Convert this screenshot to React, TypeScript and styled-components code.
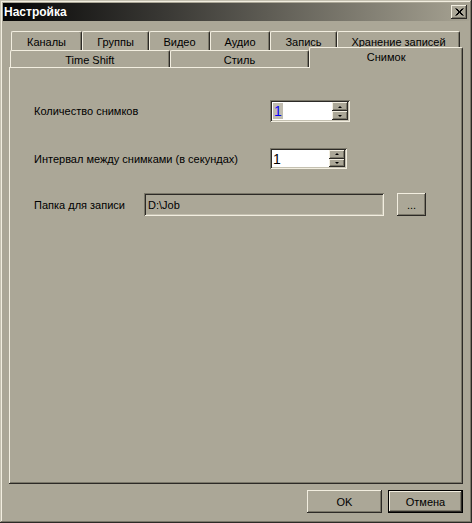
import React from "react";
import styled, { createGlobalStyle } from "styled-components";

const face = "#aba797";
const hilite = "#f2eee0";
const light = "#c4c0b0";
const shadow = "#7a7769";
const dark = "#2c2a26";

const GlobalStyle = createGlobalStyle`
  html, body {
    margin: 0;
    padding: 0;
    background: ${face};
  }
  * {
    box-sizing: border-box;
  }
`;

const Window = styled.div`
  width: 472px;
  height: 523px;
  padding: 3px;
  display: flex;
  flex-direction: column;
  background: ${face};
  font-family: "Liberation Sans", Arial, sans-serif;
  font-size: 11px;
  color: #000;
  box-shadow: inset -1px -1px ${dark}, inset 1px 1px ${light},
    inset -2px -2px ${shadow}, inset 2px 2px ${hilite};
`;

const TitleBar = styled.div`
  height: 18px;
  display: flex;
  align-items: center;
  justify-content: space-between;
  padding: 0 2px 0 1px;
  background: linear-gradient(to right, #050505 0%, #3a3935 35%, #a6a292 100%);
`;

const Title = styled.span`
  color: #fff;
  font-weight: bold;
  font-size: 12px;
`;

const CloseButton = styled.div`
  width: 16px;
  height: 14px;
  display: flex;
  align-items: center;
  justify-content: center;
  background: ${face};
  box-shadow: inset -1px -1px ${dark}, inset 1px 1px ${hilite},
    inset -2px -2px ${shadow};
`;

const Body = styled.div`
  flex: 1;
  display: flex;
  flex-direction: column;
  padding: 10px 6px 7px 6px;
`;

const TabStrip = styled.div`
  display: flex;
  flex-direction: column;
  height: 36px;
`;

const TabRow = styled.div<{ $height: number; $indent: number }>`
  display: flex;
  height: ${(p) => p.$height}px;
  margin-left: ${(p) => p.$indent}px;
  align-items: flex-end;
`;

const Tab = styled.div<{ $w: number; $active?: boolean; $h: number }>`
  width: ${(p) => p.$w}px;
  height: ${(p) => (p.$active ? p.$h + 4 : p.$h)}px;
  margin-bottom: ${(p) => (p.$active ? -1 : 0)}px;
  position: relative;
  z-index: ${(p) => (p.$active ? 2 : 0)};
  display: flex;
  justify-content: center;
  align-items: ${(p) => (p.$active ? "flex-start" : "center")};
  padding-top: ${(p) => (p.$active ? 3 : 1)}px;
  background: ${face};
  border-top: 1px solid ${hilite};
  border-left: 1px solid ${hilite};
  border-right: 1px solid ${dark};
  border-radius: 2px 2px 0 0;
  box-shadow: inset -1px 0 ${shadow};
  white-space: nowrap;
`;

const Panel = styled.div`
  flex: 1;
  position: relative;
  z-index: 1;
  display: flex;
  flex-direction: column;
  padding: 33px 0 0 25px;
  background: ${face};
  box-shadow: inset -1px -1px ${dark}, inset 1px 1px ${hilite},
    inset -2px -2px ${shadow};
`;

const FieldRow = styled.div<{ $gap: number }>`
  display: flex;
  align-items: center;
  margin-bottom: ${(p) => p.$gap}px;
`;

const Label = styled.span<{ $w: number }>`
  width: ${(p) => p.$w}px;
  flex-shrink: 0;
`;

const Sunken = styled.div<{ $w: number; $h: number; $white?: boolean }>`
  width: ${(p) => p.$w}px;
  height: ${(p) => p.$h}px;
  display: flex;
  align-items: center;
  padding: 2px;
  background: ${(p) => (p.$white ? "#fff" : face)};
  box-shadow: inset 1px 1px ${shadow}, inset -1px -1px ${hilite},
    inset 2px 2px ${dark}, inset -2px -2px ${light};
`;

const SpinText = styled.div`
  flex: 1;
  height: 100%;
  display: flex;
  align-items: center;
  padding-left: 1px;
  font-size: 14px;
`;

const Selected = styled.span`
  background: #c0bcb0;
  color: #0000ff;
  padding: 0 1px;
  line-height: 16px;
`;

const SpinButtons = styled.div`
  width: 16px;
  height: 100%;
  display: flex;
  flex-direction: column;
`;

const SpinButton = styled.div`
  flex: 1;
  display: flex;
  align-items: center;
  justify-content: center;
  background: ${face};
  box-shadow: inset -1px -1px ${dark}, inset 1px 1px ${hilite},
    inset -2px -2px ${shadow};
`;

const Arrow = styled.div<{ $up?: boolean }>`
  width: 0;
  height: 0;
  border-left: 2px solid transparent;
  border-right: 2px solid transparent;
  ${(p) =>
    p.$up ? `border-bottom: 2px solid #000;` : `border-top: 2px solid #000;`}
`;

const PathText = styled.span`
  padding-left: 2px;
`;

const Button = styled.div<{ $w: number; $default?: boolean; $ml?: number }>`
  width: ${(p) => p.$w}px;
  height: 23px;
  margin-left: ${(p) => p.$ml ?? 0}px;
  display: flex;
  align-items: center;
  justify-content: center;
  background: ${face};
  border: ${(p) => (p.$default ? `1px solid #000` : "none")};
  box-shadow: inset -1px -1px ${dark}, inset 1px 1px ${hilite},
    inset -2px -2px ${shadow};
  font-size: 11px;
`;

const Footer = styled.div`
  display: flex;
  justify-content: flex-end;
  gap: 6px;
  margin-top: 6px;
`;

function Spinner({ w, h, value, selected }: { w: number; h: number; value: string; selected?: boolean }) {
  return (
    <Sunken $w={w} $h={h} $white>
      <SpinText>{selected ? <Selected>{value}</Selected> : value}</SpinText>
      <SpinButtons>
        <SpinButton>
          <Arrow $up />
        </SpinButton>
        <SpinButton>
          <Arrow />
        </SpinButton>
      </SpinButtons>
    </Sunken>
  );
}

const topTabs = [
  { label: "Каналы", w: 71 },
  { label: "Группы", w: 67 },
  { label: "Видео", w: 61 },
  { label: "Аудио", w: 60 },
  { label: "Запись", w: 67 },
  { label: "Хранение записей", w: 123 },
];

const bottomTabs = [
  { label: "Time Shift", w: 160 },
  { label: "Стиль", w: 140 },
  { label: "Снимок", w: 154, active: true },
];

export default function App() {
  return (
    <>
      <GlobalStyle />
      <Window>
        <TitleBar>
          <Title>Настройка</Title>
          <CloseButton>
            <svg width="9" height="8" viewBox="0 0 9 8">
              <path d="M0.5 0.5 L7.5 7.5 M1.5 0.5 L8.5 7.5 M7.5 0.5 L0.5 7.5 M8.5 0.5 L1.5 7.5" stroke="#000" strokeWidth="1" />
            </svg>
          </CloseButton>
        </TitleBar>
        <Body>
          <TabStrip>
            <TabRow $height={19} $indent={2}>
              {topTabs.map((t) => (
                <Tab key={t.label} $w={t.w} $h={19}>
                  {t.label}
                </Tab>
              ))}
            </TabRow>
            <TabRow $height={17} $indent={1}>
              {bottomTabs.map((t) => (
                <Tab key={t.label} $w={t.w} $h={17} $active={t.active}>
                  {t.label}
                </Tab>
              ))}
            </TabRow>
          </TabStrip>
          <Panel>
            <FieldRow $gap={26}>
              <Label $w={236}>Количество снимков</Label>
              <Spinner w={80} h={22} value="1" selected />
            </FieldRow>
            <FieldRow $gap={24}>
              <Label $w={236}>Интервал между снимками (в секундах)</Label>
              <Spinner w={77} h={21} value="1" />
            </FieldRow>
            <FieldRow $gap={0}>
              <Label $w={110}>Папка для записи</Label>
              <Sunken $w={240} $h={23}>
                <PathText>D:\Job</PathText>
              </Sunken>
              <Button $w={29} $ml={13}>...</Button>
            </FieldRow>
          </Panel>
          <Footer>
            <Button $w={75}>OK</Button>
            <Button $w={75} $default>
              Отмена
            </Button>
          </Footer>
        </Body>
      </Window>
    </>
  );
}
